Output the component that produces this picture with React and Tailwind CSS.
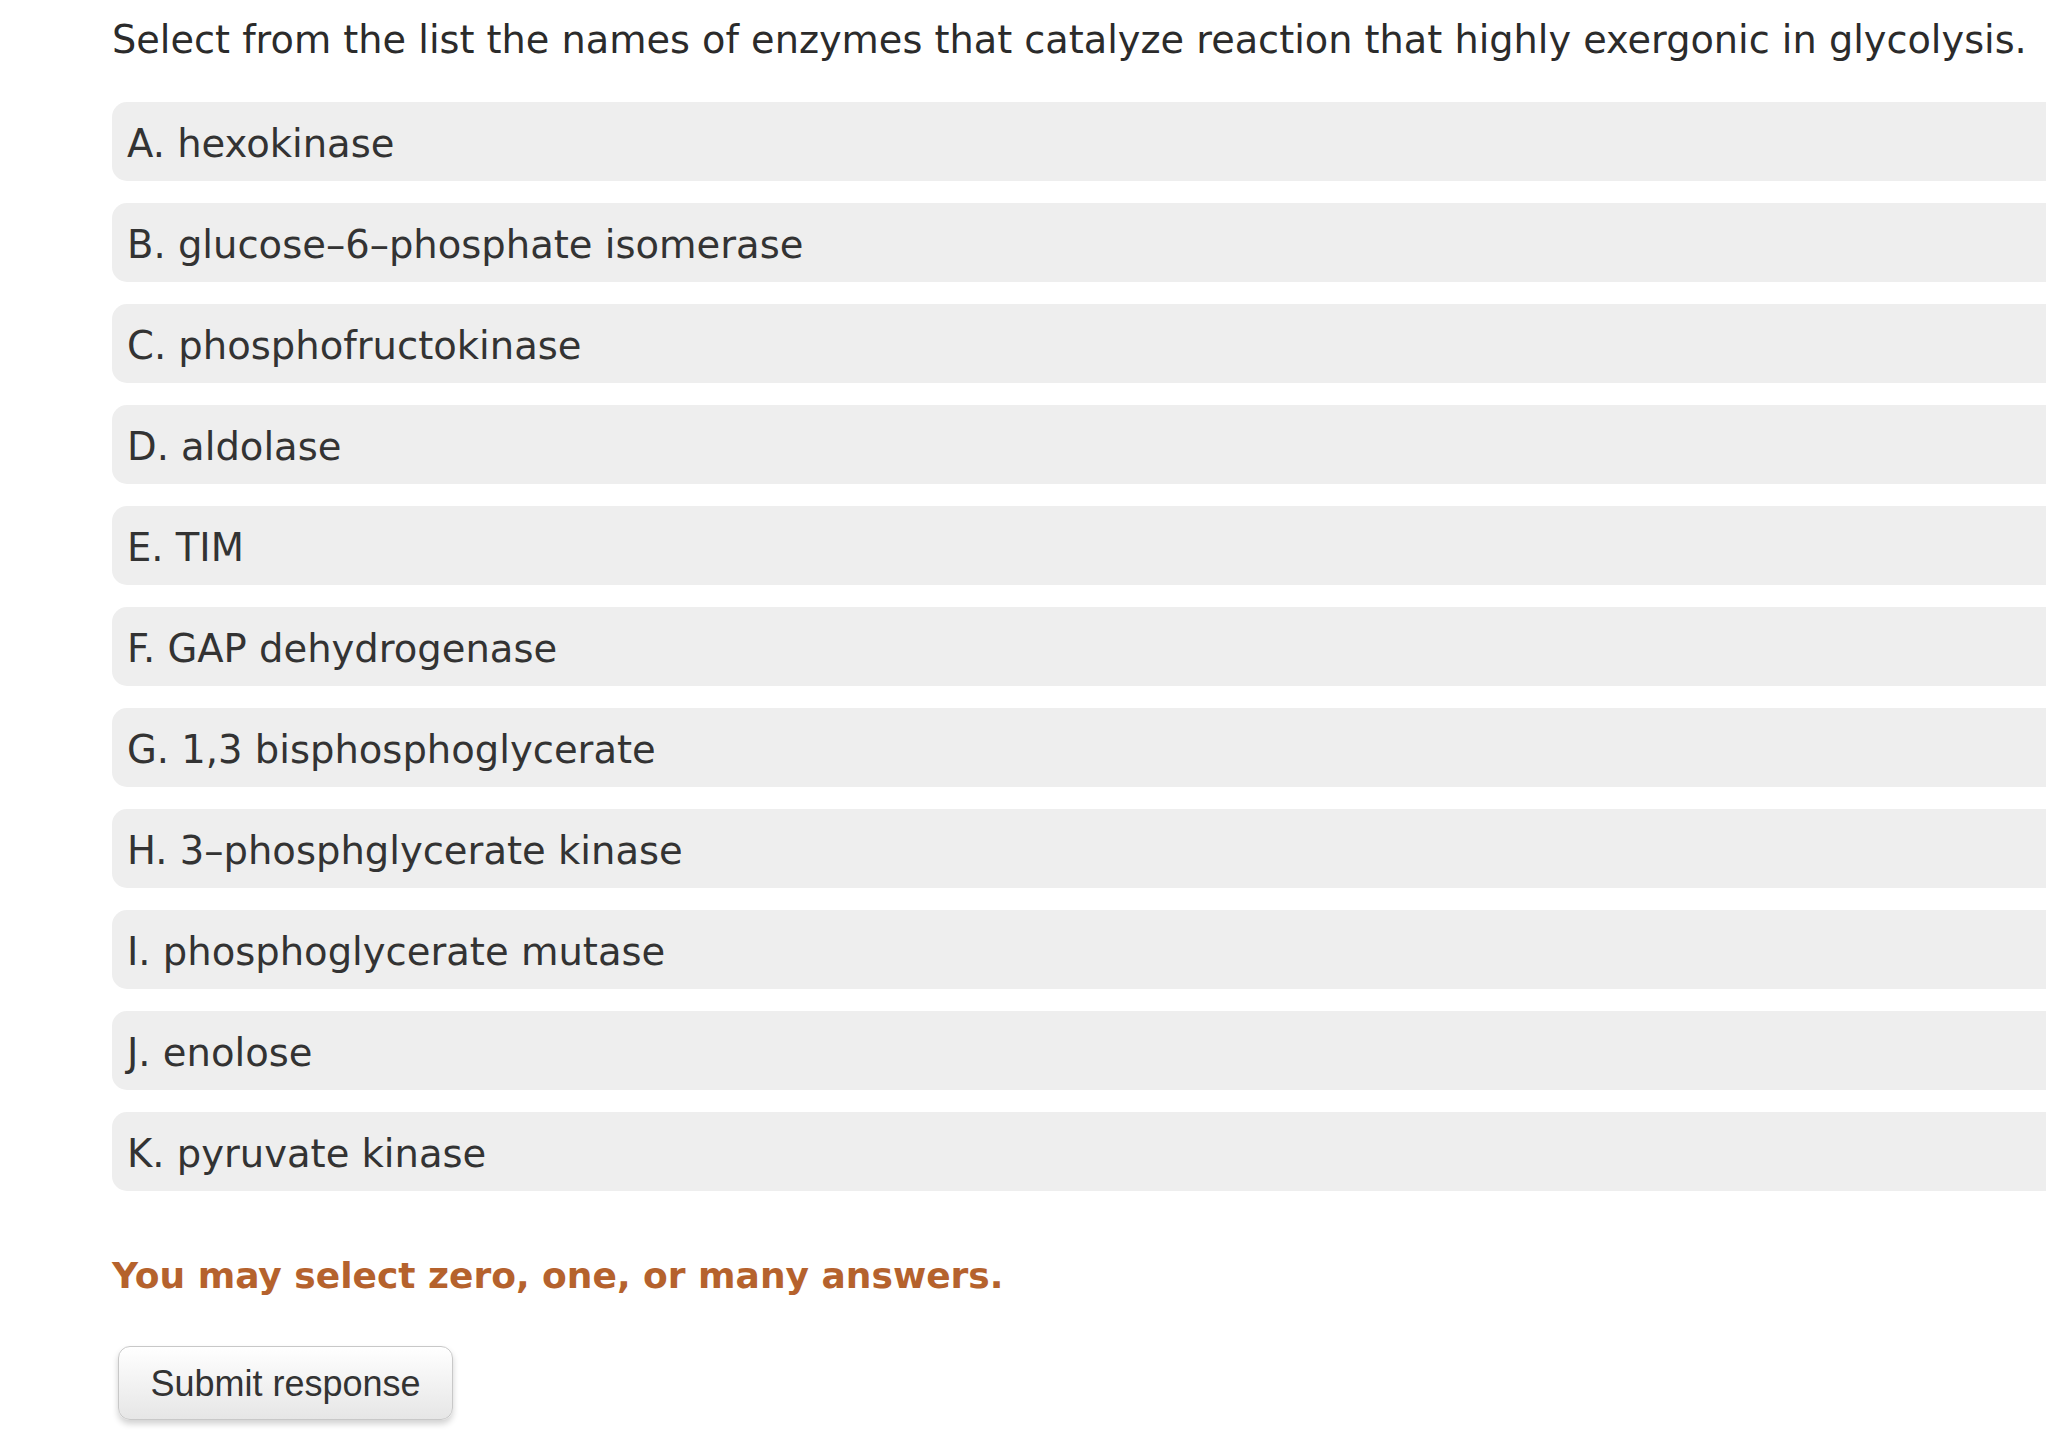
import React from 'react';

const options = [
  'A. hexokinase',
  'B. glucose-6-phosphate isomerase',
  'C. phosphofructokinase',
  'D. aldolase',
  'E. TIM',
  'F. GAP dehydrogenase',
  'G. 1,3 bisphosphoglycerate',
  'H. 3-phosphglycerate kinase',
  'I. phosphoglycerate mutase',
  'J. enolose',
  'K. pyruvate kinase',
];

export default function App() {
  return (
    <div className="min-h-screen bg-white pl-[112px] pt-[16px] font-['DejaVu_Sans',sans-serif] text-[#2b2b2b]">
      {/* Question */}
      <p className="text-[38.25px] leading-[48px] whitespace-nowrap">
        Select from the list the names of enzymes that catalyze reaction that highly exergonic in glycolysis.
      </p>

      {/* Answer list */}
      <div className="mt-[38px] flex flex-col gap-[22px]">
        {options.map((opt) => (
          <label
            key={opt}
            className="flex h-[79px] items-center rounded-l-[15px] bg-[#eeeeee] pl-[15px] pt-[4px] text-[38.5px] text-[#333333] cursor-pointer"
          >
            {opt.replace(/-/g, '\u2013')}
          </label>
        ))}
      </div>

      <p className="mt-[63px] text-[36px] font-bold leading-[44px] text-[#b5622d]">
        You may select zero, one, or many answers.
      </p>

      <button className="ml-[6px] mt-[48px] h-[74px] w-[335px] rounded-[12px] border border-[#c8c8c8] bg-gradient-to-b from-white to-[#e6e6e6] pt-[2px] font-['Liberation_Sans',sans-serif] text-[36px] text-[#333333] shadow-[0_4px_6px_rgba(0,0,0,0.18)]">
        Submit response
      </button>
    </div>
  );
}
